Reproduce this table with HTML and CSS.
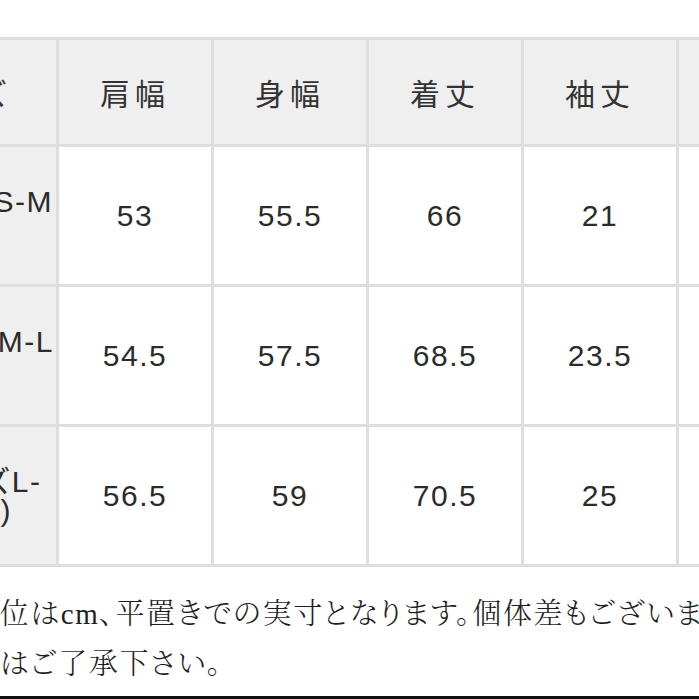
FILE: index.html
```html
<!DOCTYPE html>
<html lang="ja">
<head>
<meta charset="utf-8">
<title>サイズ表</title>
<link rel="stylesheet" href="styles.css">
</head>
<body>
<div class="page">
  <table class="size-table">
    <colgroup>
      <col class="col-first">
      <col class="col-data">
      <col class="col-data">
      <col class="col-data">
      <col class="col-data">
      <col class="col-data">
    </colgroup>
    <thead>
      <tr>
        <th class="head-cell">サイズ</th>
        <th class="head-cell">肩幅</th>
        <th class="head-cell">身幅</th>
        <th class="head-cell">着丈</th>
        <th class="head-cell">袖丈</th>
        <th class="head-cell">裄丈</th>
      </tr>
    </thead>
    <tbody>
      <tr>
        <th class="size-cell">Sサイズ(S-M<br>相当)</th>
        <td class="val-cell">53</td>
        <td class="val-cell">55.5</td>
        <td class="val-cell">66</td>
        <td class="val-cell">21</td>
        <td class="val-cell">48</td>
      </tr>
      <tr>
        <th class="size-cell">Mサイズ(M-L<br>相当)</th>
        <td class="val-cell">54.5</td>
        <td class="val-cell">57.5</td>
        <td class="val-cell">68.5</td>
        <td class="val-cell">23.5</td>
        <td class="val-cell">50</td>
      </tr>
      <tr>
        <th class="size-cell">XLサイズL-<br>(L相当)</th>
        <td class="val-cell">56.5</td>
        <td class="val-cell">59</td>
        <td class="val-cell">70.5</td>
        <td class="val-cell">25</td>
        <td class="val-cell">52</td>
      </tr>
    </tbody>
  </table>
  <div class="note">
    <p class="note-line">単位はcm、平置きでの実寸となります。個体差もございますので</p>
    <p class="note-line">点はご了承下さい。</p>
  </div>
  <div class="rule"></div>
</div>
</body>
</html>
```

FILE: styles.css
```css
html, body {
  margin: 0;
  padding: 0;
  background: #ffffff;
  overflow: hidden;
}

.page {
  width: 699px;
  height: 699px;
  overflow: hidden;
  display: flex;
  flex-direction: column;
}

.size-table {
  flex: none;
  margin: 37px 0 0 -139px;
  width: 970px;
  table-layout: fixed;
  border-collapse: separate;
  border-spacing: 3px;
  background: #dedede;
  font-family: "Liberation Sans", "Noto Sans CJK JP", sans-serif;
  color: #2b2b2b;
}

.col-first { width: 192px; }
.col-data { width: 152px; }

.head-cell {
  height: 104px;
  padding: 0;
  background: #efefef;
  font-weight: 400;
  font-size: 30px;
  letter-spacing: 5px;
  text-align: center;
  vertical-align: middle;
  color: #333333;
}

.size-cell {
  height: 137px;
  padding: 0;
  background: #efefef;
  font-weight: 400;
  font-size: 30px;
  line-height: 29px;
  letter-spacing: 1.5px;
  text-align: center;
  vertical-align: middle;
  white-space: nowrap;
}

.val-cell {
  height: 137px;
  padding: 0;
  background: #ffffff;
  font-size: 30px;
  letter-spacing: 1.5px;
  text-align: center;
  vertical-align: middle;
}

.note {
  flex: none;
  margin-top: 22px;
  font-family: "Liberation Serif", "Noto Serif CJK JP", "Noto Sans CJK JP", serif;
  font-size: 29px;
  font-weight: 300;
  font-feature-settings: "palt";
  letter-spacing: 1.6px;
  line-height: 50px;
  color: #1e1e1e;
}

.note-line {
  margin: 0 0 0 -31px;
  white-space: nowrap;
}

.rule {
  flex: none;
  margin-top: 7px;
  height: 3px;
  background: #111111;
}
```
